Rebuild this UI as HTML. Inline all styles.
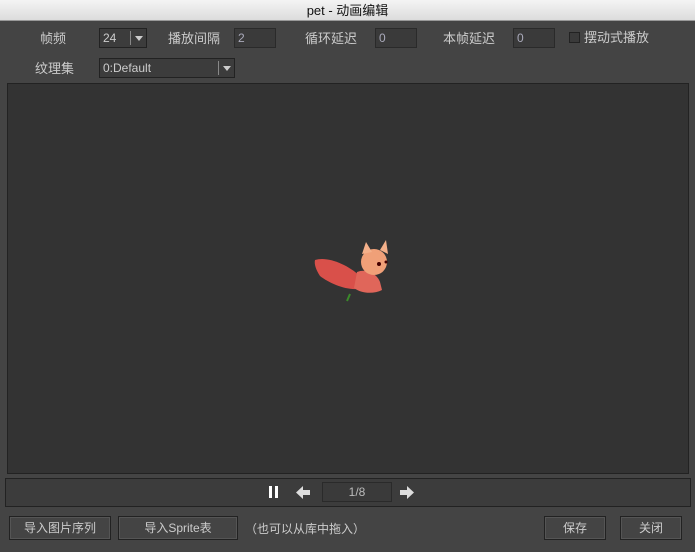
<!DOCTYPE html>
<html><head><meta charset="utf-8"><style>
*{margin:0;padding:0;box-sizing:border-box}
body{width:695px;height:552px;background:#444;font-family:"Liberation Sans","Noto Sans CJK SC",sans-serif;font-size:13px;color:#ccc;position:relative;overflow:hidden}
.a{position:absolute}
.title{left:0;top:0;width:695px;height:21px;background:linear-gradient(#f4f4f4,#dcdcdc);border-bottom:1px solid #999;color:#111;text-align:center;line-height:21px;font-size:13px}
.lbl{line-height:18px}
.inp{background:#3a3a3a;border:1px solid #2a2a2a;height:20px;line-height:18px;padding-left:3px;color:#aab;font-size:12px}
.sel{background:#3c3c3c;border:1px solid #222;height:20px;line-height:18px;padding-left:3px;color:#ccc;font-size:12px}
.arr{position:absolute;right:0;top:2px;width:16px;height:14px;border-left:1px solid #888}
.arr:after{content:"";position:absolute;left:4px;top:5px;border-left:4px solid transparent;border-right:4px solid transparent;border-top:5px solid #ccc}
.btn{background:#444;border:1px solid #222;box-shadow:inset 0 0 0 1px #555;height:24px;line-height:22px;text-align:center;color:#ccc;font-size:12px}
</style></head><body>
<div class="a title">pet - 动画编辑</div>
<div class="a lbl" style="left:40px;top:30px">帧频</div>
<div class="a sel" style="left:99px;top:28px;width:48px">24<div class="arr"></div></div>
<div class="a lbl" style="left:168px;top:30px">播放间隔</div>
<div class="a inp" style="left:234px;top:28px;width:42px">2</div>
<div class="a lbl" style="left:305px;top:30px">循环延迟</div>
<div class="a inp" style="left:375px;top:28px;width:42px">0</div>
<div class="a lbl" style="left:443px;top:30px">本帧延迟</div>
<div class="a inp" style="left:513px;top:28px;width:42px">0</div>
<div class="a" style="left:569px;top:32px;width:11px;height:11px;border:1px solid #222;background:#3a3a3a"></div>
<div class="a lbl" style="left:584px;top:29px">摆动式播放</div>
<div class="a lbl" style="left:35px;top:60px">纹理集</div>
<div class="a sel" style="left:99px;top:58px;width:136px">0:Default<div class="arr"></div></div>
<div class="a" style="left:7px;top:83px;width:682px;height:391px;background:#333;border:1px solid #222"></div>
<svg class="a" style="left:312px;top:238px" width="80" height="66" viewBox="0 0 80 66">
<path d="M3,22 C15,18 35,26 48,38 L50,50 C38,54 18,46 8,38 C4,32 2,26 3,22 Z" fill="#d9504a"/>
<path d="M45,34 C55,30 65,36 68,44 L70,52 C62,56 50,56 42,50 Z" fill="#e0665a"/>
<path d="M38,56 L35,63" stroke="#3a8a2a" stroke-width="2"/>
<ellipse cx="62" cy="24" rx="13" ry="13" fill="#f0a078"/>
<path d="M50,16 L54,4 L60,14 Z M68,12 L74,2 L76,16 Z" fill="#f4b08a"/>
<circle cx="67" cy="26" r="2" fill="#400"/><circle cx="74" cy="24" r="1.5" fill="#400"/>
</svg>
<div class="a" style="left:5px;top:478px;width:686px;height:29px;background:#3c3c3c;border:1px solid #222"></div>
<div class="a" style="left:269px;top:486px;width:3px;height:12px;background:#fff"></div>
<div class="a" style="left:275px;top:486px;width:3px;height:12px;background:#fff"></div>
<svg class="a" style="left:295px;top:485px" width="16" height="15"><path d="M1,7.5 L8,1 V5 H15 V10 H8 V14 Z" fill="#ddd"/></svg>
<div class="a" style="left:322px;top:482px;width:70px;height:20px;background:#3a3a3a;border:1px solid #2a2a2a;text-align:center;line-height:18px;font-size:12px;color:#bbb">1/8</div>
<svg class="a" style="left:399px;top:485px" width="16" height="15"><path d="M15,7.5 L8,1 V5 H1 V10 H8 V14 Z" fill="#ddd"/></svg>
<div class="a btn" style="left:9px;top:516px;width:102px">导入图片序列</div>
<div class="a btn" style="left:118px;top:516px;width:120px">导入Sprite表</div>
<div class="a" style="left:245px;top:520px;font-size:12px;color:#ccc">（也可以从库中拖入）</div>
<div class="a btn" style="left:544px;top:516px;width:62px">保存</div>
<div class="a btn" style="left:620px;top:516px;width:62px">关闭</div>
</body></html>
